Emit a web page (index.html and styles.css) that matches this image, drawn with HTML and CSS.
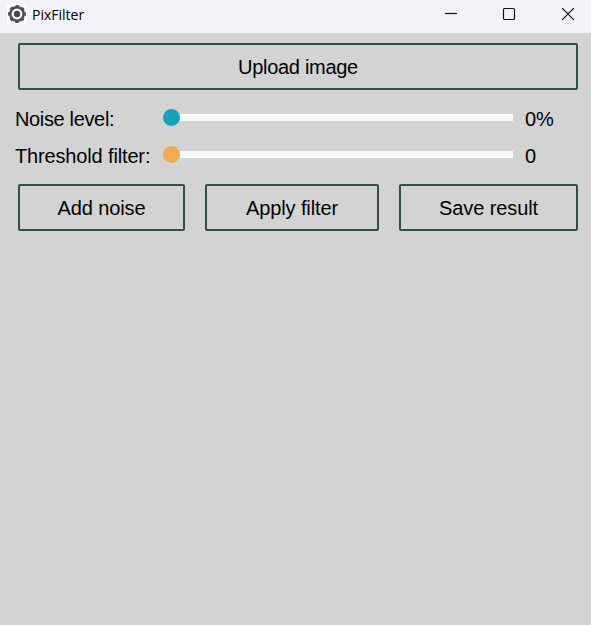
FILE: index.html
```html
<!DOCTYPE html>
<html lang="en">
<head>
<meta charset="utf-8">
<title>PixFilter</title>
<link rel="stylesheet" href="styles.css">
</head>
<body>
<header class="titlebar">
  <svg class="app-icon" width="20" height="20" viewBox="0 0 20 20">
    <rect width="20" height="20" fill="#fff"/>
    <circle cx="10" cy="10" r="6.7" fill="none" stroke="#505050" stroke-width="2.6"/>
    <circle cx="10" cy="10" r="8.1" fill="none" stroke="#505050" stroke-width="1.8" stroke-dasharray="3.4 2.96" transform="rotate(-12 10 10)"/>
    <circle cx="10" cy="10" r="3.2" fill="#484848"/>
  </svg>
  <span class="title">PixFilter</span>
  <div class="controls">
    <svg width="58" height="33" viewBox="0 0 58 33"><path d="M15 13.5h12"/></svg>
    <svg width="58" height="33" viewBox="0 0 58 33"><rect x="15.5" y="8.5" width="11" height="11" rx="1"/></svg>
    <svg width="39" height="33" viewBox="0 0 39 33"><path d="M10.2 8.2l11.6 11.6M21.8 8.2L10.2 19.8"/></svg>
  </div>
</header>
<main class="content">
  <button class="btn upload"><span>Upload image</span></button>
  <div class="sliders">
    <div class="row">
      <label class="label tight">Noise level:</label>
      <div class="slider"><div class="thumb noise"></div><div class="track"></div></div>
      <span class="value">0%</span>
    </div>
    <div class="row">
      <label class="label">Threshold filter:</label>
      <div class="slider"><div class="thumb threshold"></div><div class="track"></div></div>
      <span class="value">0</span>
    </div>
  </div>
  <div class="actions">
    <button class="btn"><span>Add noise</span></button>
    <button class="btn"><span>Apply filter</span></button>
    <button class="btn"><span>Save result</span></button>
  </div>
</main>
</body>
</html>
```
FILE: styles.css
```css
* { box-sizing: border-box; }
body {
  margin: 0;
  height: 625px;
  overflow: hidden;
  background: #d3d3d3;
  color: #000;
  font-family: "Liberation Sans", Arial, sans-serif;
  font-size: 20px;
}
.titlebar {
  display: flex;
  height: 33px;
  background: #f2f2f8;
}
.app-icon { margin: 4px 0 0 7px; }
.title {
  margin: 6px 0 0 5px;
  font: 14px/18px "Open Sans", "Noto Sans", sans-serif;
}
.controls {
  display: flex;
  margin-left: auto;
}
.controls svg {
  fill: none;
  stroke: #111;
  stroke-width: 1.2;
}
.controls svg:nth-child(-n+2) {
  margin-left: -6px;
  margin-right: 6px;
}
.content { padding: 10px 13px 0 15px; }
.btn {
  height: 47px;
  padding: 2px 0 0;
  border: 2px solid #2f4f4f;
  border-radius: 2px;
  background: transparent;
  color: inherit;
  font: inherit;
  letter-spacing: -0.1px;
}
.upload {
  display: block;
  width: 560px;
  margin-left: 3px;
  letter-spacing: -0.3px;
}
.sliders { padding-top: 10px; }
.row {
  display: grid;
  grid-template-columns: 148px 350px 1fr;
  align-items: center;
  height: 37px;
  white-space: nowrap;
}
.label, .value { padding-top: 2px; }
.label { letter-spacing: -0.15px; }
.tight { letter-spacing: -0.35px; }
.value { padding-left: 12px; }
.slider {
  display: flex;
  align-items: center;
  padding-bottom: 2px;
}
.thumb {
  width: 17px;
  height: 17px;
  border-radius: 50%;
}
.noise { background: #17a2b8; }
.threshold { background: #f0ad4e; }
.track {
  flex: 1;
  height: 7px;
  background: #f8f9fa;
}
.actions {
  display: grid;
  grid-template-columns: 167px 174px 179px;
  gap: 20px;
  padding: 10px 0 0 3px;
}
```
